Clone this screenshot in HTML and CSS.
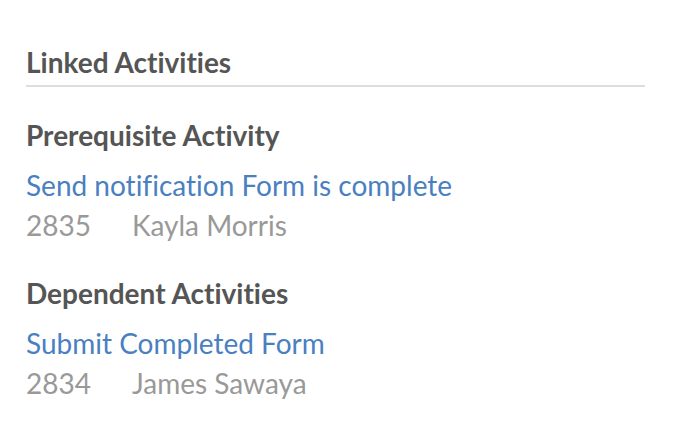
FILE: index.html
```html
<!DOCTYPE html>
<html>
<head>
<meta charset="utf-8">
<link rel="stylesheet" href="styles.css">
</head>
<body>
<section class="panel">
  <h2 class="panel-title">Linked Activities</h2>
  <div class="group">
    <h3 class="group-title">Prerequisite Activity</h3>
    <a class="activity-link" href="#">Send notification Form is complete</a>
    <div class="meta"><span class="meta-id">2835</span><span class="meta-name">Kayla Morris</span></div>
  </div>
  <div class="group">
    <h3 class="group-title">Dependent Activities</h3>
    <a class="activity-link" href="#">Submit Completed Form</a>
    <div class="meta"><span class="meta-id">2834</span><span class="meta-name">James Sawaya</span></div>
  </div>
</section>
</body>
</html>
```
FILE: styles.css
```css
html, body {
  margin: 0;
  padding: 0;
  background: #fff;
}
body {
  font-family: Lato, "Open Sans", sans-serif;
  font-variant-ligatures: none;
  font-size: 28px;
  line-height: 34px;
}
.panel {
  width: 619px;
  padding: 45px 0 0 26px;
}
.panel-title {
  margin: 0;
  font-size: 28px;
  font-weight: 700;
  color: #555;
  padding-bottom: 6px;
  border-bottom: 2px solid #ddd;
}
.group {
  display: flex;
  flex-direction: column;
  align-items: flex-start;
  margin-top: 31px;
}
.group + .group {
  margin-top: 34px;
}
.group-title {
  margin: 0;
  font-size: 28px;
  font-weight: 700;
  color: #555;
}
.activity-link {
  margin-top: 16px;
  color: #4a7fc1;
  text-decoration: none;
}
.meta {
  display: flex;
  color: #999;
  margin-top: 6px;
}
.meta-id {
  width: 106px;
}
```
